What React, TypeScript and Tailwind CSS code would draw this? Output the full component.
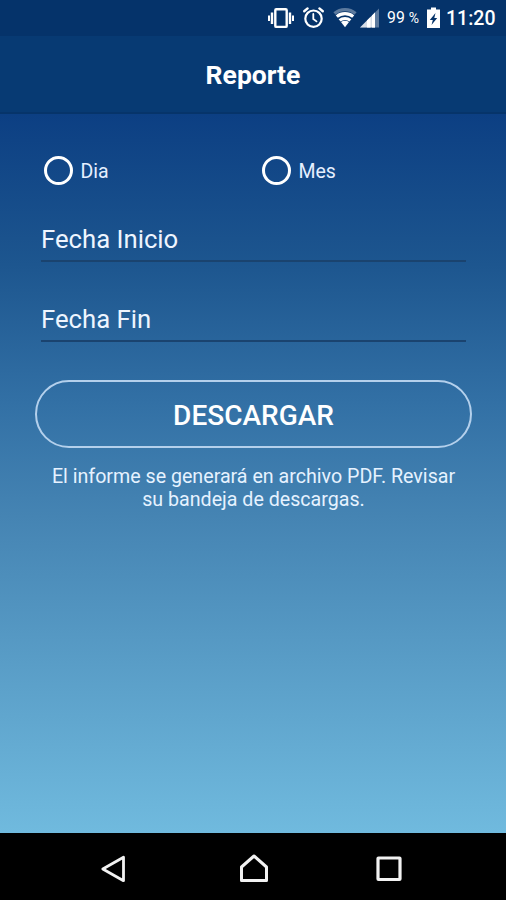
import { useState } from 'react'

type Period = 'dia' | 'mes'

function StatusBar() {
    return (
        <div className="flex h-9 items-center bg-[#05336a] pl-[267px] text-white">
            <svg className="h-6 w-7 shrink-0" viewBox="0 0 28 24" fill="none" stroke="currentColor">
                <rect x="8.3" y="3.3" width="11.4" height="17.6" rx="1" strokeWidth="2.4" />
                <path d="M5 6.5v11.5M23 6.5v11.5" strokeWidth="2.4" />
                <path d="M2 9.500v5.500M26 9.500v5.500" strokeWidth="2" />
            </svg>
            <svg className="ml-[7px] h-6 w-6 shrink-0" viewBox="0 0 24 24" fill="none" stroke="currentColor" strokeLinecap="round">
                <circle cx="11.5" cy="12.7" r="8.2" strokeWidth="2.2" />
                <path d="M2.200 5.200l3.400-2.800M20.800 5.200l-3.400-2.800" strokeWidth="2.4" />
                <path d="M11.300 8v5l3.200 2.400" strokeWidth="1.800" />
            </svg>
            <svg className="ml-[7px] h-6 w-6 shrink-0" viewBox="0 0 24 24" fill="none" stroke="currentColor">
                <path d="M1.500 7.500C7.500 2.300 16.500 2.300 22.500 7.500" strokeWidth="3.4" opacity=".35" />
                <path d="M3.800 10.600c4.600-3.900 11.800-3.900 16.400 0" strokeWidth="3.2" />
                <path d="M6.600 14.300c3-2.500 7.800-2.500 10.800 0" strokeWidth="3" />
                <path d="M8 16c2.200-1.600 5.800-1.600 8 0l-4 5.300z" fill="currentColor" stroke="none" />
            </svg>
            <svg className="ml-[3px] h-6 w-5 shrink-0" viewBox="0 0 20 24" fill="currentColor">
                <path d="M0 21.500L19 2.500v19z" opacity=".35" />
                <path d="M0 21.500L15 6.500v15z" opacity=".75" />
                <path d="M7 14.500l3.500-3.500v10.500H7zM12 9.500l3-3v15h-3z" />
            </svg>
            <span className="ml-[7px] w-[35px] text-[15.800px] leading-9 whitespace-nowrap">
                99 <span className="text-[14px]">%</span>
            </span>
            <svg className="ml-[4px] h-[22px] w-[15px] shrink-0" viewBox="0 0 15 22">
                <path d="M5 .5h5v2h4v18.500H1V2.500h4z" fill="currentColor" />
                <path d="M9.500 6L3.800 13h3L5.500 18l5.700-7H8.300z" fill="#05336a" />
            </svg>
            <span className="ml-[5px] pt-0.5 text-[19.500px] leading-[34px] font-medium whitespace-nowrap">11:20</span>
        </div>
    )
}

interface RadioProps {
    label: string
    checked: boolean
    onChange: () => void
}

function Radio({ label, checked, onChange }: RadioProps) {
    return (
        <label className="flex w-[218px] shrink-0 cursor-pointer items-center gap-2">
            <input type="radio" name="periodo" checked={checked} onChange={onChange} className="sr-only" />
            <span className="flex h-[29px] w-[29px] items-center justify-center rounded-full border-3 border-white">
                {checked && <span className="h-3.5 w-3.5 rounded-full bg-white" />}
            </span>
            <span className="pt-[3px] text-[19.500px] leading-6 text-[#e6efff]">{label}</span>
        </label>
    )
}

function DateField({ label }: { label: string }) {
    return (
        <input
            type="text"
            placeholder={label}
            aria-label={label}
            className="block h-[44px] w-full border-b-2 border-[#1a436f] bg-transparent text-[25.700px] text-[#eef5ff] outline-none placeholder:text-[#eef5ff] placeholder:opacity-100"
        />
    )
}

function NavBar() {
    return (
        <nav className="flex h-[67px] items-center justify-between bg-black pt-[5px] pr-[101px] pl-[99px] text-[#f2f2f2]">
            <svg className="h-8 w-8" viewBox="0 0 32 32" fill="none" stroke="currentColor" strokeWidth="2.800">
                <path d="M24.500 4.300v23.400L3.800 16z" strokeLinejoin="round" />
            </svg>
            <svg className="ml-1 h-8 w-8" viewBox="0 0 32 32" fill="none" stroke="currentColor" strokeWidth="3">
                <path d="M3.500 27.500V14L16 3 28.500 14v13.500z" strokeLinejoin="round" />
            </svg>
            <svg className="h-8 w-8" viewBox="0 0 32 32" fill="none" stroke="currentColor" strokeWidth="3.200">
                <rect x="5" y="5" width="22" height="21.500" rx=".5" />
            </svg>
        </nav>
    )
}

export default function App() {
    const [period, setPeriod] = useState<Period | null>(null)

    return (
        <div className="flex h-[900px] w-[506px] flex-col overflow-hidden font-['Roboto',sans-serif] text-white">
            <StatusBar />
            <header className="flex h-[78px] items-center justify-center border-b-2 border-[#06346a] bg-[#073a73] pt-[2px]">
                <h1 className="text-[26.500px] leading-[38px] font-bold">Reporte</h1>
            </header>

            <main className="flex-1 bg-[linear-gradient(180deg,#0c3f83_0%,#1d568f_21%,#3270a5_40%,#4584b3_56%,#70bade_100%)] pr-[34px] pl-[35px] pt-[42px]">
                <div className="flex pl-[8.500px]">
                    <Radio label="Dia" checked={period === 'dia'} onChange={() => setPeriod('dia')} />
                    <Radio label="Mes" checked={period === 'mes'} onChange={() => setPeriod('mes')} />
                </div>

                <div className="mt-[33px] space-y-9 px-[6px]">
                    <DateField label="Fecha Inicio" />
                    <DateField label="Fecha Fin" />
                </div>

                <button
                    type="button"
                    className="mt-[38px] block h-[68px] w-full rounded-full border-2 border-[#b4d0ec] pt-[3px] text-[28px] font-medium"
                >
                    DESCARGAR
                </button>
                <p className="mt-[17px] text-center text-[19.650px] leading-[23px] text-[#e6f2ff]">
                    El informe se generará en archivo PDF. Revisar
                    <br />
                    su bandeja de descargas.
                </p>
            </main>

            <NavBar />
        </div>
    )
}
